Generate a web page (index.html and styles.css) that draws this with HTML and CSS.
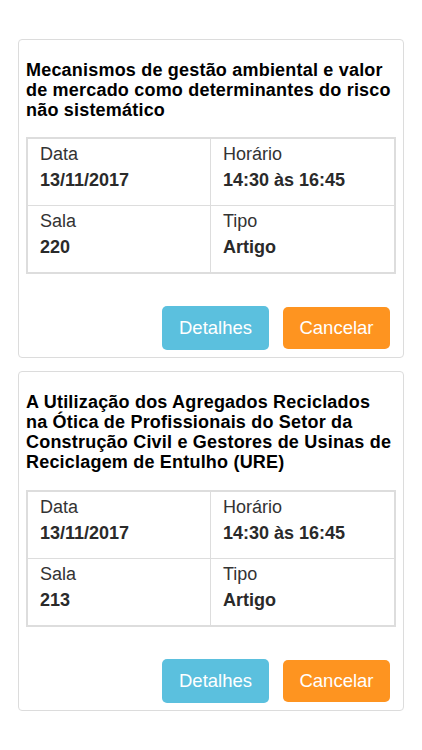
FILE: index.html
```html
<!DOCTYPE html>
<html lang="pt-BR">
<head>
<meta charset="utf-8">
<title>Minhas inscrições</title>
<link rel="stylesheet" href="styles.css">
</head>
<body>
<main class="list">
  <section class="card">
    <h4 class="title">Mecanismos de gestão ambiental e valor de mercado como determinantes do risco não sistemático</h4>
    <div class="info">
      <div class="cell"><span class="label">Data</span><span class="value">13/11/2017</span></div>
      <div class="cell"><span class="label">Horário</span><span class="value">14:30 às 16:45</span></div>
      <div class="cell"><span class="label">Sala</span><span class="value">220</span></div>
      <div class="cell"><span class="label">Tipo</span><span class="value">Artigo</span></div>
    </div>
    <div class="actions">
      <button class="btn btn-info">Detalhes</button>
      <button class="btn btn-cancel">Cancelar</button>
    </div>
  </section>
  <section class="card">
    <h4 class="title">A Utilização dos Agregados Reciclados na Ótica de Profissionais do Setor da Construção Civil e Gestores de Usinas de Reciclagem de Entulho (URE)</h4>
    <div class="info">
      <div class="cell"><span class="label">Data</span><span class="value">13/11/2017</span></div>
      <div class="cell"><span class="label">Horário</span><span class="value">14:30 às 16:45</span></div>
      <div class="cell"><span class="label">Sala</span><span class="value">213</span></div>
      <div class="cell"><span class="label">Tipo</span><span class="value">Artigo</span></div>
    </div>
    <div class="actions">
      <button class="btn btn-info">Detalhes</button>
      <button class="btn btn-cancel">Cancelar</button>
    </div>
  </section>
</main>
</body>
</html>
```
FILE: styles.css
```css
html, body {
  margin: 0;
  padding: 0;
  background: #fff;
}
body {
  font-family: "Liberation Sans", Arial, Helvetica, sans-serif;
  color: #333;
}
.list {
  padding-top: 39px;
  display: flex;
  flex-direction: column;
  gap: 13px;
}
.card {
  margin: 0 18px;
  border: 1px solid #dcdcdc;
  border-radius: 4px;
  padding: 0 7px 7px;
}
.title {
  margin: 21px 0 17px;
  font-size: 18px;
  line-height: 19.8px;
  font-weight: bold;
  letter-spacing: 0.2px;
  color: #000;
}
.info {
  border: 2px solid #dddddd;
  display: grid;
  grid-template-columns: 1fr 1fr;
}
.cell {
  display: flex;
  flex-direction: column;
  padding: 2px 12px 12px;
  font-size: 18px;
  line-height: 26px;
}
.cell:nth-child(odd) {
  border-right: 1px solid #dddddd;
}
.cell:nth-child(-n+2) {
  border-bottom: 1px solid #dddddd;
}
.label {
  color: #333;
}
.value {
  font-weight: bold;
  color: #2a2a2a;
}
.actions {
  display: flex;
  justify-content: flex-end;
  align-items: center;
  gap: 14px;
  margin-top: 32px;
  padding-right: 6px;
}
.btn {
  font-family: inherit;
  font-size: 18.5px;
  color: #fff;
  border: none;
  width: 107px;
  height: 44px;
  border-radius: 5px;
  padding: 0;
}
.btn-info {
  background: #5bc0de;
}
.btn-cancel {
  background: #fe9420;
  height: 42px;
}
```
